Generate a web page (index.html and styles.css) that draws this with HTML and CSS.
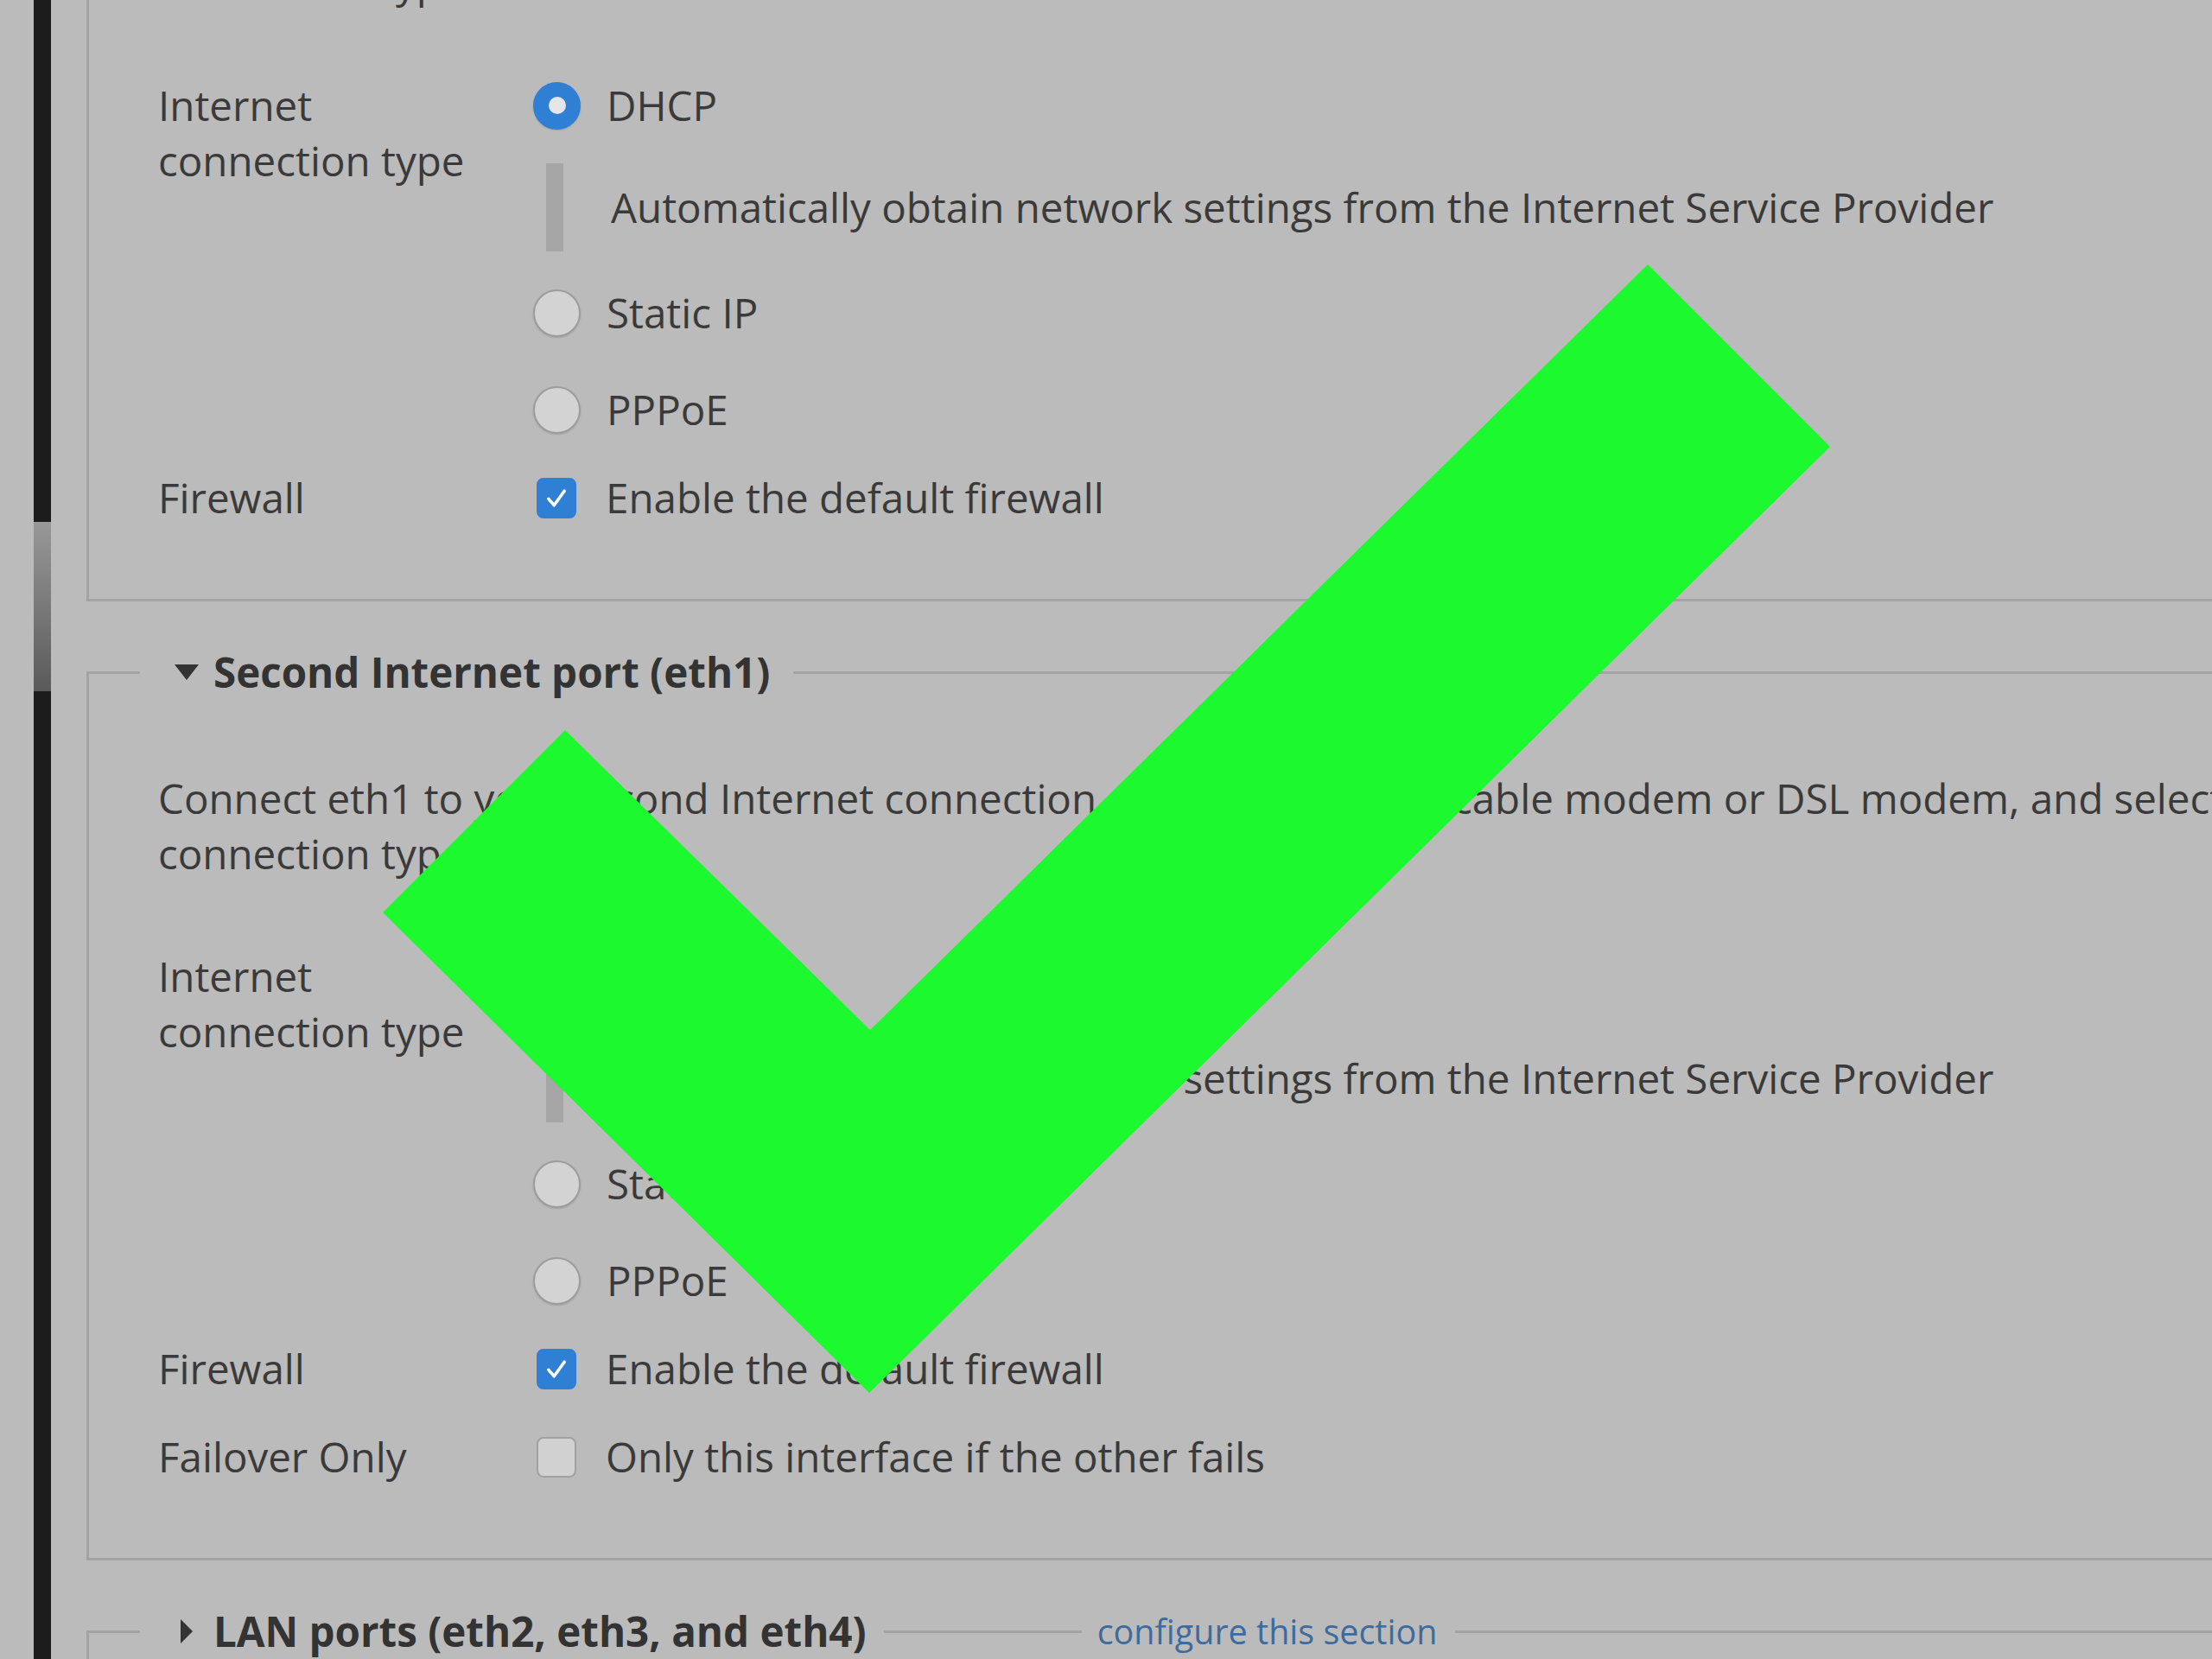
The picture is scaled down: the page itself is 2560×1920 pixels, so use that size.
FILE: index.html
```html
<!DOCTYPE html>
<html lang="en">
<head>
    <meta charset="UTF-8">
    <meta name="viewport" content="width=device-width, initial-scale=1.0">
    <title>Router setup</title>
    <link rel="stylesheet" href="styles.css">
</head>
<body>
    <div class="gutter"></div>
    <div class="scrollbar"><div class="thumb"></div></div>

    <main class="settings">
        <fieldset class="panel panel-first">
            <legend><span class="caret caret-open"></span>First Internet port (eth0)</legend>
            <p class="intro">Connect eth0 to your first Internet connection, such as a primary cable modem or DSL modem, and select the connection type.</p>

            <div class="field">
                <div class="field-label">Internet connection type</div>
                <div class="field-control">
                    <label class="option"><span class="radio checked"></span>DHCP</label>
                    <div class="hint">Automatically obtain network settings from the Internet Service Provider</div>
                    <label class="option"><span class="radio"></span>Static IP</label>
                    <label class="option"><span class="radio"></span>PPPoE</label>
                </div>
            </div>
            <div class="field">
                <div class="field-label">Firewall</div>
                <div class="field-control">
                    <label class="option">
                        <span class="checkbox checked"><svg viewBox="0 0 46 46"><path d="M13 24 L20 32 L33 14"/></svg></span>
                        Enable the default firewall
                    </label>
                </div>
            </div>
        </fieldset>

        <fieldset class="panel">
            <legend><span class="caret caret-open"></span>Second Internet port (eth1)</legend>
            <p class="intro">Connect eth1 to your second Internet connection, such as a second cable modem or DSL modem, and select the connection type.</p>

            <div class="field">
                <div class="field-label">Internet connection type</div>
                <div class="field-control">
                    <label class="option"><span class="radio checked"></span>DHCP</label>
                    <div class="hint">Automatically obtain network settings from the Internet Service Provider</div>
                    <label class="option"><span class="radio"></span>Static IP</label>
                    <label class="option"><span class="radio"></span>PPPoE</label>
                </div>
            </div>
            <div class="field">
                <div class="field-label">Firewall</div>
                <div class="field-control">
                    <label class="option">
                        <span class="checkbox checked"><svg viewBox="0 0 46 46"><path d="M13 24 L20 32 L33 14"/></svg></span>
                        Enable the default firewall
                    </label>
                </div>
            </div>
            <div class="field">
                <div class="field-label">Failover Only</div>
                <div class="field-control">
                    <label class="option"><span class="checkbox"></span>Only this interface if the other fails</label>
                </div>
            </div>
        </fieldset>

        <fieldset class="panel panel-closed">
            <legend>
                <span class="caret caret-shut"></span>LAN ports (eth2, eth3, and eth4)
                <span class="legend-rule"></span>
                <a href="#" class="configure">configure this section</a>
            </legend>
        </fieldset>
    </main>

    <!-- big green tick laid over the page -->
    <svg class="tick" viewBox="0 0 2560 1920">
        <polygon points="654,845 443,1056 1006,1612 2118,517 1907,306 1007,1192"/>
    </svg>
</body>
</html>
```

FILE: styles.css
```css
body{
    margin: 0;
    height: 1920px;
    overflow: hidden;
    position: relative;
    display: flex;
    background-color: #bbbbbb;
    color: #3a3a3a;
    font-family: "Open Sans", "Liberation Sans", sans-serif;
    font-size: 47.5px;
    line-height: 64px;
}

.gutter{
    width: 39px;
    flex: none;
}
.scrollbar{
    width: 20px;
    flex: none;
    background-color: #1c1c1c;
}
.thumb{
    margin-top: 604px;
    height: 196px;
    background: linear-gradient(#989898, #5a5a5a);
}

.settings{
    width: 2644px;
    flex: none;
}

.panel{
    margin: 50px 0 0 41px;
    padding: 82px 0 85px 80px;
    border: 3px solid #a3a3a3;
    min-width: 0;
}
.panel-first{
    margin-top: -262px;
}
.panel-closed{
    height: 400px;
}

legend{
    display: flex;
    align-items: center;
    margin-left: -21px;
    padding: 0 27px 0 39px;
    font-size: 47.5px;
    font-weight: 700;
    line-height: 64px;
    color: #333;
}
.caret{
    width: 29px;
    height: 29px;
    margin-right: 17px;
    display: flex;
    align-items: center;
    justify-content: center;
}
.caret::before{
    content: "";
    border-style: solid;
    border-color: transparent;
}
.caret-open::before{
    border-width: 18px 14px 0 14px;
    border-top-color: #333;
}
.caret-shut::before{
    border-width: 14px 0 14px 14px;
    border-left-color: #333;
}
.legend-rule{
    width: 229px;
    height: 3px;
    margin: 0 18px 0 20px;
    background-color: #a3a3a3;
}
.configure{
    color: #3e6b9d;
    font-size: 39.5px;
    font-weight: 400;
    text-decoration: none;
    margin-right: -6px;
}

.intro{
    margin: 0 0 78px;
}

.field{
    display: grid;
    grid-template-columns: 434px 1fr;
    margin-top: 38px;
}
.intro + .field{
    margin-top: 0;
}
.field-label{
    padding-right: 30px;
}

.option{
    display: flex;
    align-items: center;
    height: 64px;
}
.option + .option{
    margin-top: 48px;
}

.radio{
    width: 51px;
    height: 51px;
    margin-right: 30px;
    border: 2px solid #9d9d9d;
    border-radius: 50%;
    background-color: #d3d3d3;
    box-shadow: 0 1px 2px rgba(0, 0, 0, 0.15);
    display: flex;
    align-items: center;
    justify-content: center;
    flex: none;
}
.radio.checked{
    border-color: #2f80d5;
    background-color: #2f80d5;
}
.radio.checked::after{
    content: "";
    width: 20px;
    height: 20px;
    border-radius: 50%;
    background-color: #e6e6e6;
}

.checkbox{
    width: 42px;
    height: 43px;
    margin: 0 34px 0 4px;
    border: 2px solid #a1a1a1;
    border-radius: 8px;
    background-color: #d1d1d1;
    flex: none;
}
.checkbox.checked{
    border-color: #2f7fd4;
    background-color: #2f7fd4;
}
.checkbox svg{
    display: block;
    width: 100%;
    height: 100%;
}
.checkbox path{
    fill: none;
    stroke: #fff;
    stroke-width: 4;
    stroke-linecap: round;
    stroke-linejoin: round;
}

.hint{
    height: 102px;
    margin: 35px 0 39px 15px;
    padding-left: 55px;
    border-left: 20px solid #a6a6a6;
    display: flex;
    align-items: center;
    white-space: nowrap;
}

.tick{
    position: absolute;
    top: 0;
    left: 0;
    width: 2560px;
    height: 1920px;
    pointer-events: none;
}
.tick polygon{
    fill: #1df92f;
}
```
